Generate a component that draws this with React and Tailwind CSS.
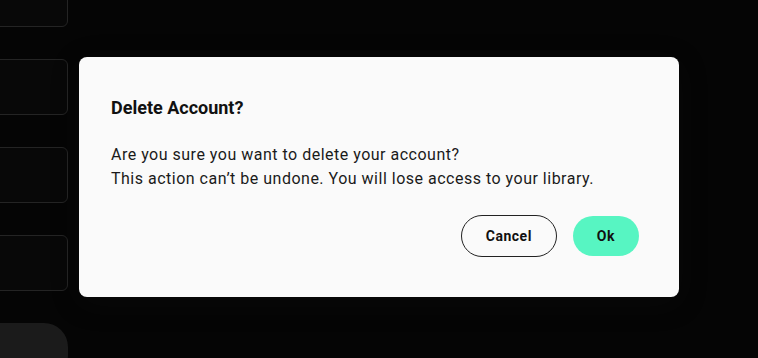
export default function App() {
  return (
    <div className="relative w-[758px] h-[358px] overflow-hidden bg-[#050505]" style={{ fontFamily: "Roboto, 'Noto Sans', sans-serif" }}>
      <div className="flex flex-col gap-[32px] -mt-[29px] -ml-[40px] w-[108px]">
        <div className="h-[56px] rounded-[6px] border border-[#242424] bg-[#080808]" />
        <div className="h-[56px] rounded-[6px] border border-[#242424] bg-[#080808]" />
        <div className="h-[56px] rounded-[6px] border border-[#242424] bg-[#080808]" />
        <div className="h-[56px] rounded-[6px] border border-[#242424] bg-[#080808]" />
        <div className="h-[56px] rounded-[24px] bg-[#1b1b1b]" />
      </div>
      <div className="absolute left-[79px] top-[57px] w-[600px] h-[240px] rounded-[8px] bg-[#fafafa] shadow-[0_6px_30px_rgba(30,30,30,0.18)] px-[32px] pt-[39px] flex flex-col">
        <h2 className="text-[18px] leading-[24px] font-bold text-[#111111]">Delete Account?</h2>
        <p className="mt-[23px] text-[16px] leading-[24px] tracking-[0.5px] text-[#1a1a1a]">
          Are you sure you want to delete your account?
          <br />
          This action can’t be undone. You will lose access to your library.
        </p>
        <div className="mt-[24px] flex justify-end items-center gap-[16px] pr-[8px]">
          <button className="h-[42px] px-[24px] rounded-full border border-[#222222] bg-transparent text-[14px] tracking-[0.5px] font-bold text-[#111111]">Cancel</button>
          <button className="h-[40px] px-[24px] rounded-full bg-[#57f5c2] text-[14px] tracking-[0.5px] font-bold text-[#111111]">Ok</button>
        </div>
      </div>
    </div>
  );
}
